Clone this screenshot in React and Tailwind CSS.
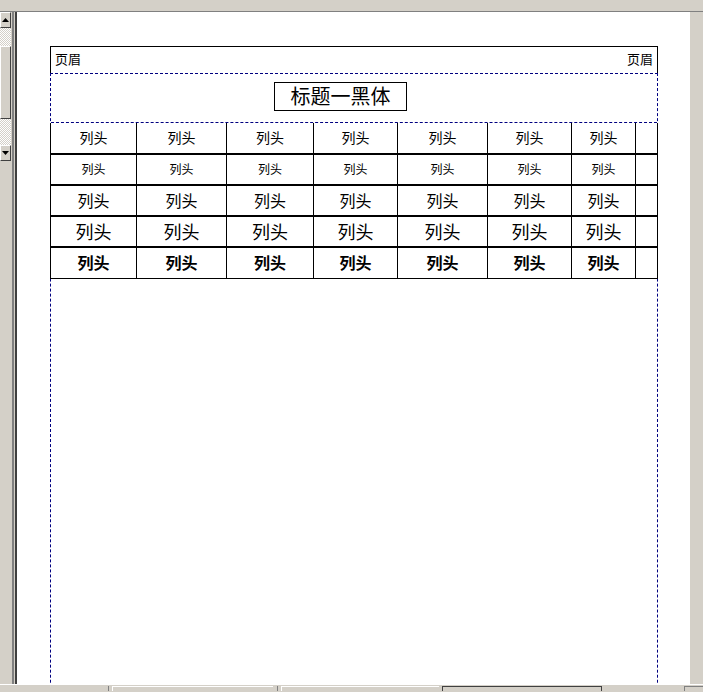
import React from 'react'

const cols = [87, 90, 87, 84, 90, 84, 64, 22]

const rows = [
  { text: 'text-[14px]', h: 'h-[32px]', last: false },
  { text: 'text-[12px]', h: 'h-[31px]', last: false },
  { text: 'text-[16px]', h: 'h-[31px]', last: false },
  { text: 'text-[18px]', h: 'h-[31px]', last: false },
  { text: 'text-[16px] font-bold', h: 'h-[31px]', last: true },
]

function Arrow({ up }) {
  return (
    <div className='h-[16px] w-[11px] bg-[#d4d0c8] border-t border-l border-white border-r border-b border-r-[#404040] border-b-[#404040] flex items-center justify-center'>
      <svg width='7' height='4' viewBox='0 0 7 4'>
        {up ? <polygon points='3.5,0 7,4 0,4' fill='#000' /> : <polygon points='0,0 7,0 3.5,4' fill='#000' />}
      </svg>
    </div>
  )
}

function Scrollbar() {
  return (
    <div className='w-[11px] flex flex-col'>
      <Arrow up />
      <div className='h-[18px] bg-[repeating-conic-gradient(#ffffff_0_25%,#d4d0c8_0_50%)] bg-size-[2px_2px]' />
      <div className='h-[73px] bg-[#d4d0c8] border-t border-l border-white border-r border-b border-r-[#404040] border-b-[#404040]' />
      <div className='h-[26px] bg-[repeating-conic-gradient(#ffffff_0_25%,#d4d0c8_0_50%)] bg-size-[2px_2px]' />
      <Arrow />
    </div>
  )
}

function Row({ text, h, last }) {
  return (
    <div className={'flex border-black ' + h + ' ' + (last ? 'border-b' : 'border-b-2')}>
      {cols.map((w, i) => (
        <div
          key={i}
          style={{ width: w }}
          className={'flex items-center justify-center leading-none pb-[2px] border-r border-black ' + (i === 0 ? 'border-l ' : '') + text}
        >
          {i < 7 ? '列头' : ''}
        </div>
      ))}
    </div>
  )
}

export default function App() {
  return (
    <div className="w-[703px] h-[692px] bg-[#d4d0c8] flex flex-col overflow-hidden text-black font-['Noto_Sans_CJK_SC',sans-serif]">
      <div className='h-[12px] shrink-0 border-b border-[#808080]' />
      <div className='flex h-[672px] shrink-0'>
        <Scrollbar />
        <div className='w-[1px] bg-[#d4d0c8]' />
        <div className='w-[2px] bg-[#808080]' />
        <div className='w-[1px] bg-[#d4d0c8]' />
        <div className='w-[2px] bg-[#404040]' />
        <div className='w-[673px] bg-white overflow-hidden pl-[33px] pt-[34px]'>
          <div className='w-[608px]'>
            <div className='h-[27px] border-t border-x border-black flex justify-between items-center px-[4px] pb-[3px] text-[13px] leading-none'>
              <span>页眉</span>
              <span>页眉</span>
            </div>
            <div className='h-[700px] border border-dashed border-[#000080]'>
              <div className='h-[49px] border-b border-dashed border-[#000080] pt-[8px]'>
                <div className='ml-[223px] w-[133px] h-[29px] pb-[2px] border border-black flex items-center justify-center text-[20px] leading-none'>
                  标题一黑体
                </div>
              </div>
              <div className='-mx-[1px] w-[608px]'>
                {rows.map((r, i) => (
                  <Row key={i} {...r} />
                ))}
              </div>
            </div>
          </div>
        </div>
        <div className='flex-1 bg-[#d4d0c8]' />
      </div>
      <div className='h-[7px] shrink-0 border-t border-white flex items-end'>
        <div className='w-[108px]' />
        <div className='w-[4px] h-[5px] border-l border-[#808080]' />
        <div className='w-[161px] h-[5px] border-t border-l border-white bg-[#d4d0c8]' />
        <div className='w-[4px]' />
        <div className='w-[4px] h-[5px] border-l border-[#808080]' />
        <div className='w-[158px] h-[5px] border-t border-l border-white' />
        <div className='w-[3px]' />
        <div className='w-[160px] h-[5px] border-t border-l border-r border-[#404040] bg-[#d4d0c8]' />
        <div className='w-[82px]' />
        <div className='flex-1 h-[5px] border-t border-l border-[#808080]' />
      </div>
    </div>
  )
}
